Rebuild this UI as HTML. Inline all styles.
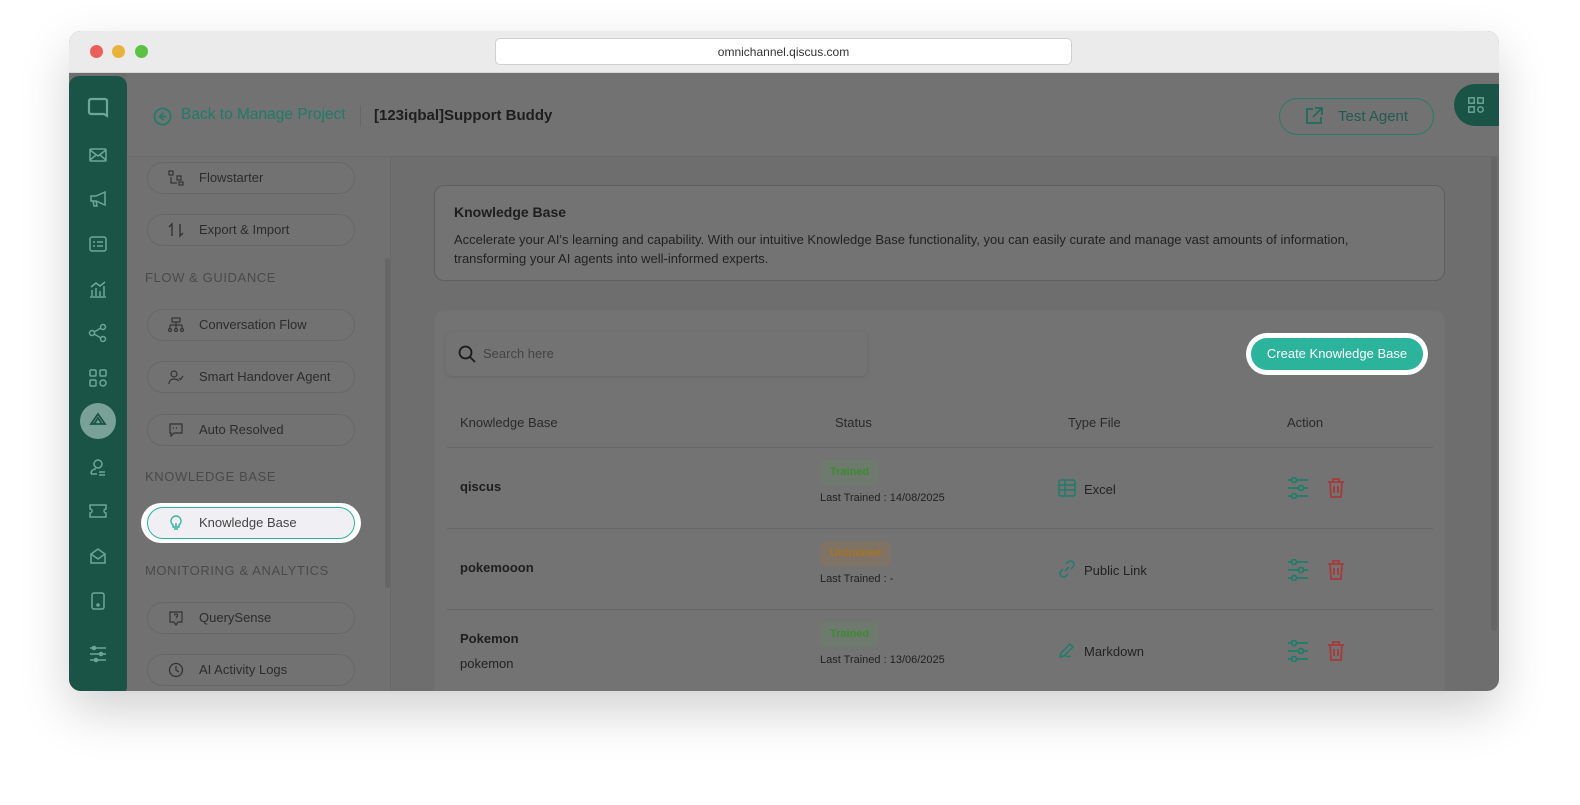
<!DOCTYPE html>
<html><head><meta charset="utf-8"><style>
*{box-sizing:border-box;margin:0;padding:0}
body{width:1580px;height:805px;background:#fff;font-family:"Liberation Sans",sans-serif;position:relative;overflow:hidden}
.win{position:absolute;left:69px;top:31px;width:1430px;height:660px;border-radius:12px;overflow:hidden;background:#6e6e6e;box-shadow:0 20px 50px rgba(0,0,0,.18)}
.bar{position:absolute;left:0;top:0;width:100%;height:42px;background:#ebebeb;border-bottom:1px solid #d8d8d8}
.dot{position:absolute;top:14px;width:13px;height:13px;border-radius:50%}
.url{position:absolute;left:426px;top:7px;width:577px;height:27px;background:#fff;border:1px solid #d0d0d0;border-radius:5px;font-size:12px;color:#333;text-align:center;line-height:26px}
.side{position:absolute;left:0;top:45px;width:58px;height:620px;background:#195447;border-radius:10px 10px 10px 10px}
.si{position:absolute;left:19px;width:20px;height:20px}
.hdr{position:absolute;left:58px;top:42px;right:0;height:84px;background:#727272;border-bottom:1px solid #6a6a6a}
.menu{position:absolute;left:58px;top:126px;width:264px;bottom:0;background:#717171;border-right:1px solid #686868}
.pill{position:absolute;left:20px;width:208px;height:32px;border:1px solid #676767;border-radius:16px;background:#727272;font-size:13px;color:#2c2c2c;line-height:30px;padding-left:51px}
.pill svg{position:absolute;left:20px;top:7px}
.sec{position:absolute;left:18px;font-size:13px;color:#4a4a4a;letter-spacing:.6px}
.card{position:absolute;background:#737373;border:1px solid #5e5e5e;border-radius:10px}
.row{position:absolute;left:378px;width:986px;border-top:1px solid #666;height:81px}
.badge{position:absolute;font-size:11px;padding:0 10px;height:25px;line-height:25px;border-radius:6px;font-weight:bold}
</style></head><body>
<div class="win">
 <div class="bar">
  <div class="dot" style="left:21px;background:#ec5f58"></div>
  <div class="dot" style="left:43px;background:#e8b33a"></div>
  <div class="dot" style="left:66px;background:#5cc244"></div>
  <div class="url">omnichannel.qiscus.com</div>
 </div>
 <div class="side">
  <svg class="si" style="top:20px;width:24px;height:24px;left:17px" viewBox="0 0 24 24" fill="none" stroke="#6fa697" stroke-width="2.2"><path d="M5 3h14a2 2 0 0 1 2 2v15l-3-2H5a2 2 0 0 1-2-2V5a2 2 0 0 1 2-2z"/></svg>
  <svg class="si" style="top:69px" viewBox="0 0 20 20" fill="none" stroke="#6fa697" stroke-width="1.5"><rect x="2" y="4" width="16" height="12" rx="1"/><path d="M2 5l8 6 8-6M2 15l6-5M18 15l-6-5"/></svg>
  <svg class="si" style="top:113px" viewBox="0 0 20 20" fill="none" stroke="#6fa697" stroke-width="1.5"><path d="M3 7h5l9-4v13l-9-4H3zM5 12l1 5h3l-1-5"/></svg>
  <svg class="si" style="top:158px" viewBox="0 0 20 20" fill="none" stroke="#6fa697" stroke-width="1.5"><rect x="2" y="3" width="16" height="14" rx="2"/><path d="M5 8h2M5 12h2M9 8h6M9 12h6"/></svg>
  <svg class="si" style="top:203px" viewBox="0 0 20 20" fill="none" stroke="#6fa697" stroke-width="1.5"><path d="M2 18h16M4 17v-6M8 17V9M12 17v-5M16 17V7M3 8l5-4 4 3 5-4"/></svg>
  <svg class="si" style="top:247px" viewBox="0 0 20 20" fill="none" stroke="#6fa697" stroke-width="1.5"><circle cx="4" cy="10" r="2.5"/><circle cx="15" cy="4" r="2.5"/><circle cx="15" cy="16" r="2.5"/><path d="M6 9l7-4M6 11l7 4"/></svg>
  <svg class="si" style="top:292px" viewBox="0 0 20 20" fill="none" stroke="#6fa697" stroke-width="1.5"><rect x="2" y="2" width="6" height="6" rx="1"/><rect x="12" y="2" width="6" height="6" rx="1"/><rect x="2" y="12" width="6" height="6" rx="1"/><circle cx="15" cy="15" r="3"/></svg>
  <div style="position:absolute;left:11px;top:327px;width:36px;height:36px;border-radius:50%;background:#7aa197"></div>
  <svg class="si" style="top:335px" viewBox="0 0 20 20" fill="none" stroke="#195447" stroke-width="1.8"><path d="M10 3l7 10H3zM6 13l4-6 4 6"/></svg>
  <svg class="si" style="top:381px" viewBox="0 0 20 20" fill="none" stroke="#6fa697" stroke-width="1.5"><circle cx="10" cy="7" r="4"/><path d="M3 17c0-4 3-5 5-5M11 15h6M11 18h6M3 17h6"/></svg>
  <svg class="si" style="top:425px" viewBox="0 0 20 20" fill="none" stroke="#6fa697" stroke-width="1.5"><path d="M2 4h16v4a2 2 0 0 0 0 4v4H2v-4a2 2 0 0 0 0-4z"/></svg>
  <svg class="si" style="top:470px" viewBox="0 0 20 20" fill="none" stroke="#6fa697" stroke-width="1.5"><path d="M3 8l7-5 7 5v9H3zM3 8l7 5 7-5"/></svg>
  <svg class="si" style="top:515px" viewBox="0 0 20 20" fill="none" stroke="#6fa697" stroke-width="1.5"><rect x="4" y="2" width="12" height="16" rx="2"/><circle cx="10" cy="14" r="1"/></svg>
  <svg class="si" style="top:568px" viewBox="0 0 20 20" fill="none" stroke="#6fa697" stroke-width="1.5"><path d="M2 4h16M2 10h16M2 16h16"/><circle cx="6" cy="4" r="1.5"/><circle cx="13" cy="10" r="1.5"/><circle cx="8" cy="16" r="1.5"/></svg>
 </div>
 <div class="hdr">
  <svg style="position:absolute;left:26px;top:34px" width="19" height="19" viewBox="0 0 20 20" fill="none" stroke="#1d7d69" stroke-width="1.8"><circle cx="10" cy="10" r="8.5"/><path d="M11 6l-4 4 4 4M7 10h7"/></svg>
  <div style="position:absolute;left:54px;top:33px;font-size:15.5px;color:#1d7d69">Back to Manage Project</div>
  <div style="position:absolute;left:233px;top:32px;width:1px;height:22px;background:#666"></div>
  <div style="position:absolute;left:247px;top:34px;font-size:15px;font-weight:bold;color:#1e1e1e">[123iqbal]Support Buddy</div>
  <div style="position:absolute;left:1152px;top:25px;width:155px;height:37px;border:1px solid #2a7a68;border-radius:19px;font-size:15px;color:#235a4f;line-height:35px;padding-left:58px">Test Agent</div>
  <svg style="position:absolute;left:1177px;top:33px" width="20" height="20" viewBox="0 0 20 20" fill="none" stroke="#1d6d5c" stroke-width="1.8"><path d="M9 3H3v14h14v-6M11 2h7v7M18 2L9 11"/></svg>
  <div style="position:absolute;left:1327px;top:11px;width:50px;height:42px;border-radius:21px 0 0 21px;background:#195447"></div>
  <svg style="position:absolute;left:1340px;top:23px" width="18" height="18" viewBox="0 0 20 20" fill="none" stroke="#6fa697" stroke-width="1.6"><rect x="2" y="2" width="6" height="6"/><rect x="12" y="2" width="6" height="6"/><rect x="2" y="12" width="6" height="6"/><circle cx="15" cy="15" r="3"/></svg>
 </div>
 <div class="menu">
  <div class="pill" style="top:5px"><svg width="16" height="16" viewBox="0 0 16 16" fill="none" stroke="#333" stroke-width="1.2"><rect x="1" y="1" width="4" height="4"/><rect x="9" y="6" width="4" height="4"/><rect x="11" y="12" width="4" height="3"/><path d="M3 7v6h6"/></svg>Flowstarter</div>
  <div class="pill" style="top:57px"><svg width="16" height="16" viewBox="0 0 16 16" fill="none" stroke="#333" stroke-width="1.4"><path d="M4 14V2L1 5M12 2v12l3-3"/></svg>Export &amp; Import</div>
  <div class="sec" style="top:113px">FLOW &amp; GUIDANCE</div>
  <div class="pill" style="top:152px"><svg width="16" height="16" viewBox="0 0 16 16" fill="none" stroke="#333" stroke-width="1.2"><rect x="4" y="1" width="8" height="4"/><path d="M8 5v3M2 8h12M2 8v3M8 8v3M14 8v3"/><circle cx="2" cy="13" r="1.5"/><circle cx="8" cy="13" r="1.5"/><circle cx="14" cy="13" r="1.5"/></svg>Conversation Flow</div>
  <div class="pill" style="top:204px"><svg width="16" height="16" viewBox="0 0 16 16" fill="none" stroke="#333" stroke-width="1.2"><circle cx="6" cy="5" r="3"/><path d="M1 15c0-4 3-5 5-5s4 1 5 2M11 9l1.5 1.5L15 7"/></svg>Smart Handover Agent</div>
  <div class="pill" style="top:257px"><svg width="16" height="16" viewBox="0 0 16 16" fill="none" stroke="#333" stroke-width="1.2"><path d="M2 2h12v9H6l-3 3v-3H2z"/><path d="M5 6h1M8 6h1M11 6h0"/></svg>Auto Resolved</div>
  <div class="sec" style="top:312px">KNOWLEDGE BASE</div>
  <div style="position:absolute;left:14px;top:346px;width:220px;height:40px;border-radius:20px;background:#fff"></div>
  <div class="pill" style="top:350px;background:#f0f0f4;border-color:#2bb39b;color:#444"><svg width="16" height="16" viewBox="0 0 16 16" fill="none" stroke="#2bb39b" stroke-width="1.4"><path d="M8 1a5 5 0 0 0-3 9v2h6v-2a5 5 0 0 0-3-9zM6 14h4M8 12V8"/></svg>Knowledge Base</div>
  <div class="sec" style="top:406px">MONITORING &amp; ANALYTICS</div>
  <div class="pill" style="top:445px"><svg width="16" height="16" viewBox="0 0 16 16" fill="none" stroke="#333" stroke-width="1.2"><path d="M2 2h12v10H10l-2 3-2-3H2z"/><path d="M6.5 5.5a1.5 1.5 0 1 1 2 1.4V8M8 9.5v.5"/></svg>QuerySense</div>
  <div class="pill" style="top:497px"><svg width="16" height="16" viewBox="0 0 16 16" fill="none" stroke="#333" stroke-width="1.3"><circle cx="8" cy="8" r="6.5"/><path d="M8 4v4l3 2"/></svg>AI Activity Logs</div>
  <div style="position:absolute;left:258px;top:101px;width:5px;height:330px;background:#666;border-radius:3px"></div>
 </div>
 <div class="card" style="left:365px;top:154px;width:1011px;height:96px">
  <div style="position:absolute;left:19px;top:18px;font-size:14px;font-weight:bold;color:#1e1e1e">Knowledge Base</div>
  <div style="position:absolute;left:19px;top:45px;width:935px;font-size:13px;line-height:18.5px;color:#222">Accelerate your AI's learning and capability. With our intuitive Knowledge Base functionality, you can easily curate and manage vast amounts of information, transforming your AI agents into well-informed experts.</div>
 </div>
 <div class="card" style="left:365px;top:279px;width:1011px;height:400px;border-color:#707070;border-radius:10px 10px 0 0">
  <div style="position:absolute;left:11px;top:21px;width:421px;height:44px;background:#737373;border-radius:6px;box-shadow:0 1px 4px rgba(0,0,0,.12)"></div>
  <svg style="position:absolute;left:22px;top:33px" width="20" height="20" viewBox="0 0 20 20" fill="none" stroke="#1a1a1a" stroke-width="1.8"><circle cx="8.5" cy="8.5" r="6"/><path d="M13 13l5 5"/></svg>
  <div style="position:absolute;left:48px;top:35px;font-size:13px;color:#444">Search here</div>
  <div style="position:absolute;left:811px;top:22px;width:182px;height:42px;border-radius:21px;background:#fff"></div>
  <div style="position:absolute;left:816px;top:27px;width:172px;height:32px;border-radius:16px;background:#2bb39b;color:#fff;font-size:13px;text-align:center;line-height:32px">Create Knowledge Base</div>
  <div style="position:absolute;left:25px;top:104px;font-size:13px;color:#2a2a2a">Knowledge Base</div>
  <div style="position:absolute;left:400px;top:104px;font-size:13px;color:#2a2a2a">Status</div>
  <div style="position:absolute;left:633px;top:104px;font-size:13px;color:#2a2a2a">Type File</div>
  <div style="position:absolute;left:852px;top:104px;font-size:13px;color:#2a2a2a">Action</div>
 </div>
 <div class="row" style="top:416px">
  <div style="position:absolute;left:13px;top:31px;font-size:13px;font-weight:bold;color:#1e1e1e">qiscus</div>
  <div class="badge" style="left:373px;top:12px;background:#6f7a6f;color:#3e8a32">Trained</div>
  <div style="position:absolute;left:373px;top:44px;font-size:11px;color:#222">Last Trained : 14/08/2025</div>
  <svg style="position:absolute;left:611px;top:31px" width="18" height="18" viewBox="0 0 18 18" fill="none" stroke="#1d7d69" stroke-width="1.5"><rect x="1" y="1" width="16" height="16" rx="2"/><path d="M1 6h16M1 11h16M7 1v16"/></svg>
  <div style="position:absolute;left:637px;top:34px;font-size:13px;color:#222">Excel</div>
 </div>
 <div class="row" style="top:497px">
  <div style="position:absolute;left:13px;top:31px;font-size:13px;font-weight:bold;color:#1e1e1e">pokemooon</div>
  <div class="badge" style="left:373px;top:12px;background:#7e7365;color:#a57425">Untrained</div>
  <div style="position:absolute;left:373px;top:44px;font-size:11px;color:#222">Last Trained : -</div>
  <svg style="position:absolute;left:611px;top:31px" width="18" height="18" viewBox="0 0 18 18" fill="none" stroke="#1d7d69" stroke-width="1.5"><path d="M7 11l4-4M8 4l2-2a3 3 0 0 1 5 5l-2 2M10 14l-2 2a3 3 0 0 1-5-5l2-2"/></svg>
  <div style="position:absolute;left:637px;top:34px;font-size:13px;color:#222">Public Link</div>
 </div>
 <div class="row" style="top:578px">
  <div style="position:absolute;left:13px;top:21px;font-size:13px;font-weight:bold;color:#1e1e1e">Pokemon</div>
  <div style="position:absolute;left:13px;top:46px;font-size:13px;color:#222">pokemon</div>
  <div class="badge" style="left:373px;top:12px;background:#6f7a6f;color:#3e8a32">Trained</div>
  <div style="position:absolute;left:373px;top:44px;font-size:11px;color:#222">Last Trained : 13/06/2025</div>
  <svg style="position:absolute;left:611px;top:31px" width="18" height="18" viewBox="0 0 18 18" fill="none" stroke="#1d7d69" stroke-width="1.5"><path d="M2 16l1-4L12 3l3 3-9 9zM2 16c3 0 4-2 6-1s3 1 5 0"/></svg>
  <div style="position:absolute;left:637px;top:34px;font-size:13px;color:#222">Markdown</div>
 </div>
 <svg width="0" height="0" style="position:absolute"><defs>
  <g id="sl" fill="none" stroke="#1d7d69" stroke-width="1.8"><path d="M1 3h20M1 11h20M1 19h20"/><circle cx="7" cy="3" r="2.5" fill="#737373"/><circle cx="14" cy="11" r="2.5" fill="#737373"/><circle cx="7" cy="19" r="2.5" fill="#737373"/></g>
  <g id="tr" fill="none" stroke="#a63a3a" stroke-width="1.8"><path d="M1 4h16M6 4V1h6v3M3 4l1 15h10l1-15M7 8v7M11 8v7"/></g>
 </defs></svg>
 <svg style="position:absolute;left:1218px;top:446px" width="22" height="22"><use href="#sl"/></svg>
 <svg style="position:absolute;left:1258px;top:447px" width="18" height="21"><use href="#tr"/></svg>
 <svg style="position:absolute;left:1218px;top:528px" width="22" height="22"><use href="#sl"/></svg>
 <svg style="position:absolute;left:1258px;top:529px" width="18" height="21"><use href="#tr"/></svg>
 <svg style="position:absolute;left:1218px;top:609px" width="22" height="22"><use href="#sl"/></svg>
 <svg style="position:absolute;left:1258px;top:610px" width="18" height="21"><use href="#tr"/></svg>
 <div style="position:absolute;left:1422px;top:126px;width:6px;height:474px;background:#666;border-radius:3px"></div>
</div>
</body></html>
